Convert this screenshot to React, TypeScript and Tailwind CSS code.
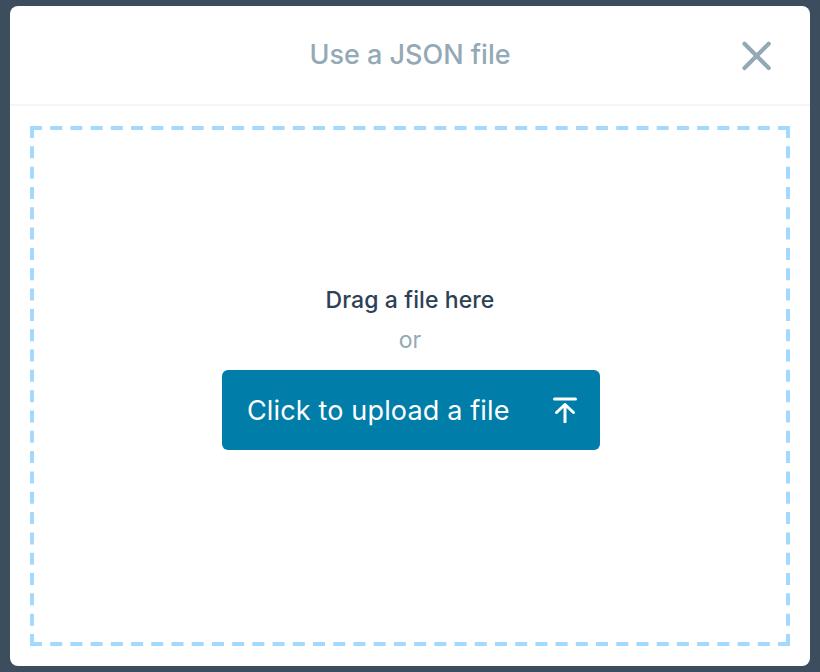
const App = () => {
  return (
    <div className="h-[672px] w-[820px] overflow-hidden bg-[#3c4d5e] px-[10px] pt-[6px] font-['Inter',sans-serif]">
      <div className="flex h-[660px] flex-col rounded-[8px] bg-white">
        <div className="relative flex h-[100px] items-center justify-center border-b-2 border-[#f3f6f9]">
          <h2 className="pb-[2px] text-[27px] font-medium leading-none text-[#94a9b6]">Use a JSON file</h2>
          <button className="absolute right-[38px] top-[35px] text-[#94a9b6]">
            <svg width="30" height="30" viewBox="0 0 30 30" fill="none" stroke="currentColor" strokeWidth="4.2" strokeLinecap="round">
              <path d="M2.5 2.8 L26.7 27 M26.7 2.8 L2.5 27" />
            </svg>
          </button>
        </div>
        <div className="flex-1 p-5">
          <div className="relative flex h-full flex-col items-center justify-center pb-[38px] pl-[2px]">
            <svg className="absolute inset-0" width="760" height="520" fill="none" stroke="#a3d9ff" strokeWidth="4">
              <path d="M0 2 H760 M0 518 H760" strokeDasharray="12 8.216" />
              <path d="M2 0 V520 M758 0 V520" strokeDasharray="12 8.32" />
            </svg>
            <p className="pr-[2px] text-[23px] font-medium leading-[32px] tracking-[0.1px] text-[#2c4155]">Drag a file here</p>
            <p className="mt-2 pr-[2px] text-[23px] leading-[32px] text-[#94a9b6]">or</p>
            <button className="relative mt-[14px] flex h-20 w-[378px] items-center justify-between rounded-[6px] bg-[#007da8] pl-[25px] pr-[22px] text-[27px] tracking-[0.15px] text-white">
              <span className="pt-[2px]">Click to upload a file</span>
              <svg width="26" height="26" viewBox="0 0 26 26" fill="none" stroke="currentColor" strokeWidth="3" strokeLinecap="round" strokeLinejoin="round">
                <path d="M2.5 2 H23.5 M13 25 V8 M4.5 15.5 L13 7.5 L21.5 15.5" />
              </svg>
            </button>
          </div>
        </div>
      </div>
    </div>
  );
};

export default App;
